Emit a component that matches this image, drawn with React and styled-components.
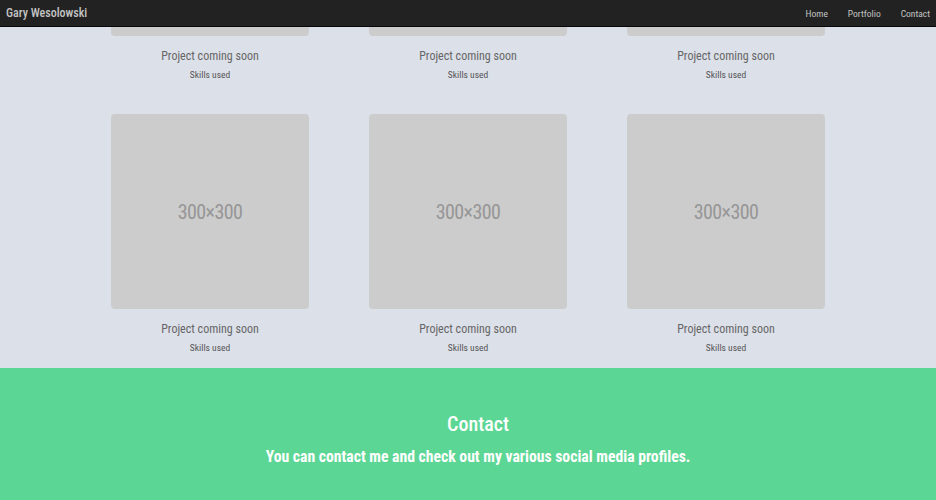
import React from "react";
import styled, { createGlobalStyle } from "styled-components";

const GlobalStyle = createGlobalStyle`
  html, body {
    margin: 0;
    padding: 0;
    background: #dce0e9;
    font-family: "Roboto Condensed", "Liberation Sans Narrow", Roboto, sans-serif;
    overflow: hidden;
  }
`;

const projects = [1, 2, 3, 4, 5, 6];

function App() {
  return (
    <>
      <GlobalStyle />
      <Nav>
        <Brand>Gary Wesolowski</Brand>
        <Links>
          <a href="#home">Home</a>
          <a href="#portfolio">Portfolio</a>
          <a href="#contact">Contact</a>
        </Links>
      </Nav>
      <Portfolio>
        <Grid>
          {projects.map((p) => (
            <Card key={p}>
              <Thumb>300×300</Thumb>
              <Title>Project coming soon</Title>
              <Skills>Skills used</Skills>
            </Card>
          ))}
        </Grid>
      </Portfolio>
      <Contact>
        <h2>Contact</h2>
        <p>You can contact me and check out my various social media profiles.</p>
      </Contact>
    </>
  );
}

const Nav = styled.nav`
  position: fixed;
  top: 0;
  left: 0;
  right: 0;
  height: 26px;
  background: #222;
  border-bottom: 1px solid #080808;
  display: flex;
  align-items: center;
  justify-content: space-between;
  padding: 0 6px;
  z-index: 10;
`;

const Brand = styled.div`
  color: #c4c4c4;
  font-size: 12px;
  font-weight: 500;
`;

const Links = styled.div`
  display: flex;
  gap: 20px;

  a {
    color: #c4c4c4;
    font-size: 9.5px;
    text-decoration: none;
  }
`;

const Portfolio = styled.section`
  margin-top: -159px;
  padding-bottom: 14px;
`;

const Grid = styled.div`
  width: 774px;
  margin: 0 auto;
  display: grid;
  grid-template-columns: repeat(3, 258px);
  row-gap: 33px;
`;

const Card = styled.div`
  display: flex;
  flex-direction: column;
  align-items: center;
`;

const Thumb = styled.div`
  width: 198px;
  height: 195px;
  background: #cccccc;
  border-radius: 4px;
  display: flex;
  align-items: center;
  justify-content: center;
  color: #969696;
  font-size: 20px;
  letter-spacing: -0.6px;
`;

const Title = styled.div`
  margin-top: 13px;
  color: #666;
  font-size: 12px;
  line-height: 15px;
`;

const Skills = styled.div`
  margin-top: 5px;
  color: #555;
  font-size: 9.5px;
  line-height: 12px;
`;

const Contact = styled.section`
  background: #5cd694;
  color: #fff;
  text-align: center;
  padding: 44px 0 60px 20px;

  h2 {
    margin: 0;
    font-size: 20px;
    font-weight: 500;
    line-height: 24px;
  }

  p {
    margin: 11px 0 0;
    font-size: 15.7px;
    font-weight: 700;
    line-height: 20px;
  }
`;

export default App;
